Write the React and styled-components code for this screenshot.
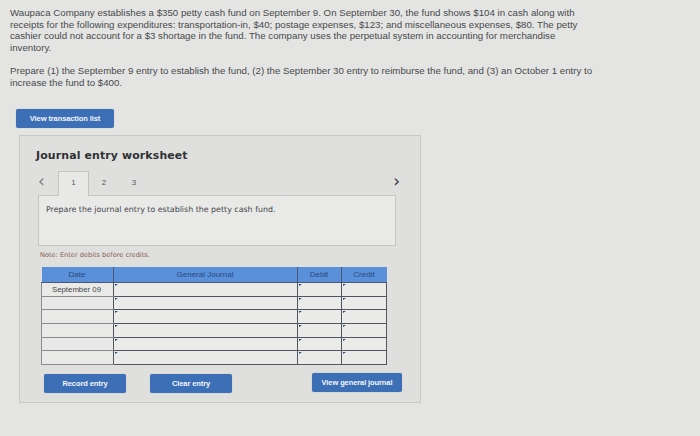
import React from "react";
import styled, { createGlobalStyle } from "styled-components";

const GlobalStyle = createGlobalStyle`
  html, body {
    margin: 0;
    padding: 0;
    background: #e4e5e3;
  }
  body {
    font-family: "Liberation Sans", Arial, sans-serif;
    color: #3c3d3f;
  }
`;

const rows = ["September 09", "", "", "", "", ""];

const App = () => {
  return (
    <Page>
      <GlobalStyle />
      <Intro>
        Waupaca Company establishes a $350 petty cash fund on September 9. On September 30, the fund shows $104 in cash along with
        <br />
        receipts for the following expenditures: transportation-in, $40; postage expenses, $123; and miscellaneous expenses, $80. The petty
        <br />
        cashier could not account for a $3 shortage in the fund. The company uses the perpetual system in accounting for merchandise
        <br />
        inventory.
      </Intro>
      <Intro top="12px">
        Prepare (1) the September 9 entry to establish the fund, (2) the September 30 entry to reimburse the fund, and (3) an October 1 entry to
        <br />
        increase the fund to $400.
      </Intro>

      <BlueButton width="98px" style={{ marginLeft: 6, marginTop: 21 }}>
        View transaction list
      </BlueButton>

      <Panel>
        <Title>Journal entry worksheet</Title>
        <TabRow>
          <Arrow>&lsaquo;</Arrow>
          <Tab active>1</Tab>
          <Tab>2</Tab>
          <Tab>3</Tab>
          <Spacer />
          <Arrow right>&rsaquo;</Arrow>
        </TabRow>
        <InstructionBox>
          Prepare the journal entry to establish the petty cash fund.
        </InstructionBox>
        <Note>Note: Enter debits before credits.</Note>

        <Table>
          <thead>
            <tr>
              <Th w="71px">Date</Th>
              <Th w="183px">General Journal</Th>
              <Th w="43px">Debit</Th>
              <Th w="45px">Credit</Th>
            </tr>
          </thead>
          <tbody>
            {rows.map((d, i) => (
              <tr key={i}>
                <DateCell>{d}</DateCell>
                <InputCell />
                <InputCell />
                <InputCell />
              </tr>
            ))}
          </tbody>
        </Table>

        <ActionRow>
          <BlueButton width="82px">Record entry</BlueButton>
          <BlueButton width="82px" style={{ marginLeft: 24 }}>
            Clear entry
          </BlueButton>
          <Spacer />
          <BlueButton width="90px" style={{ marginTop: -1 }}>
            View general journal
          </BlueButton>
        </ActionRow>
      </Panel>
    </Page>
  );
};

export default App;

const Page = styled.div`
  width: 700px;
  height: 436px;
  box-sizing: border-box;
  padding: 7px 10px 0;
  overflow: hidden;
`;

const Intro = styled.p`
  margin: ${(p) => p.top || "0"} 0 0;
  font-size: 9.7px;
  line-height: 11.5px;
  color: #47494c;
  white-space: nowrap;
`;

const BlueButton = styled.div`
  display: flex;
  align-items: center;
  justify-content: center;
  width: ${(p) => p.width};
  height: 19px;
  background: #3d6fb7;
  border-radius: 2px;
  color: #f4f6fb;
  font-size: 7.5px;
  font-weight: 700;
  letter-spacing: -0.1px;
  box-shadow: 0 0 1px rgba(30, 50, 90, 0.4);
`;

const Panel = styled.div`
  margin: 7px 0 0 9px;
  width: 402px;
  height: 268px;
  box-sizing: border-box;
  background: #dfe0de;
  border: 1px solid #c8c9c7;
  padding: 13px 0 0 0;
`;

const Title = styled.div`
  padding-left: 16px;
  font-family: "DejaVu Sans", Verdana, sans-serif;
  font-weight: 700;
  font-size: 10.9px;
  line-height: 14px;
  color: #2f3033;
  letter-spacing: 0.15px;
`;

const TabRow = styled.div`
  display: flex;
  align-items: stretch;
  height: 24px;
  margin-top: 8px;
  padding-left: 18px;
  padding-right: 20px;
`;

const Arrow = styled.div`
  display: flex;
  align-items: center;
  font-size: 17px;
  width: 20px;
  justify-content: ${(p) => (p.right ? "flex-end" : "flex-start")};
  color: ${(p) => (p.right ? "#3a3b3e" : "#7b7d80")};
  padding-bottom: 4px;
  font-family: "DejaVu Sans", sans-serif;
`;

const Tab = styled.div`
  display: flex;
  align-items: center;
  justify-content: center;
  width: ${(p) => (p.active ? "31px" : "30px")};
  box-sizing: border-box;
  font-size: 8px;
  color: #55575a;
  padding-bottom: 4px;
  background: ${(p) => (p.active ? "#e8e9e7" : "transparent")};
  border: 1px solid ${(p) => (p.active ? "#c3c4c2" : "transparent")};
  border-bottom: none;
  margin-bottom: -1px;
  position: relative;
  z-index: 1;
`;

const Spacer = styled.div`
  flex: 1;
`;

const InstructionBox = styled.div`
  margin-left: 18px;
  width: 358px;
  height: 51px;
  box-sizing: border-box;
  background: #e9eae8;
  border: 1px solid #c6c7c5;
  padding: 9px 0 0 7px;
  font-family: "DejaVu Sans", Verdana, sans-serif;
  font-size: 7.9px;
  color: #44464a;
`;

const Note = styled.div`
  margin: 5px 0 0 20px;
  font-family: "DejaVu Sans", Verdana, sans-serif;
  font-size: 6.6px;
  color: #8a5a50;
  line-height: 9px;
`;

const Table = styled.table`
  margin: 7px 0 0 21px;
  border-collapse: collapse;
  table-layout: fixed;
  width: 342px;
`;

const Th = styled.th`
  width: ${(p) => p.w};
  height: 15px;
  padding: 0;
  background: #5a8fd9;
  color: #274a80;
  font-size: 8px;
  font-weight: 400;
  border-left: 1.5px solid #4b5a72;
  border-bottom: 1.5px solid #4b5a72;
  &:first-child {
    border-left: none;
  }
`;

const DateCell = styled.td`
  height: 12.7px;
  padding: 0 0 0 10px;
  font-size: 7.8px;
  color: #44464a;
  background: #e9eae8;
  border-bottom: 1px solid #8a8c90;
  border-left: 1px solid #8a8c90;
`;

const InputCell = styled.td`
  height: 12.7px;
  padding: 0;
  background: #eaebe9;
  border: 1.5px solid #505660;
  position: relative;
  &::before {
    content: "";
    position: absolute;
    left: 1px;
    top: 1px;
    border-top: 2px solid #2c4a7a;
    border-right: 3px solid transparent;
  }
`;

const ActionRow = styled.div`
  display: flex;
  align-items: flex-start;
  margin: 9px 0 0 24px;
  padding-right: 18px;
`;
